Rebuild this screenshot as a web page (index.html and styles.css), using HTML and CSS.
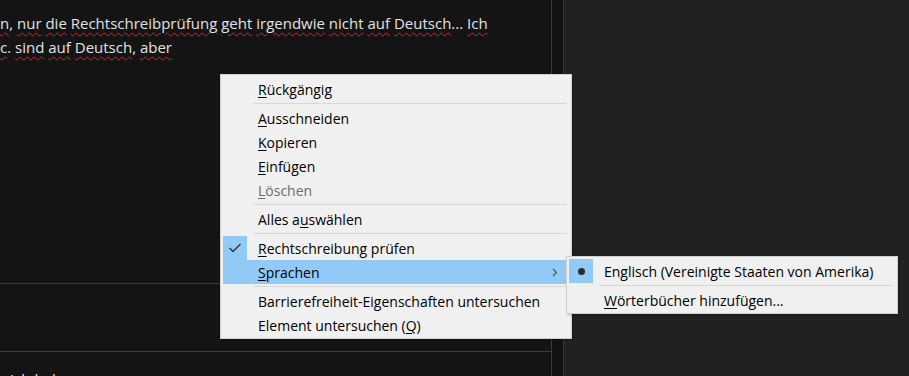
FILE: index.html
```html
<!DOCTYPE html>
<html lang="de">
<head>
    <meta charset="UTF-8">
    <title>Kontextmenü</title>
    <link rel="stylesheet" href="styles.css">
</head>
<body>
    <div class="page">
        <main class="thread">
            <div class="post">
                <p class="post-text">
                    <span class="typo">n</span>, <span class="typo">nur</span> <span class="typo">die</span> <span class="typo">Rechtschreibprüfung</span> <span class="typo">geht</span> <span class="typo">irgendwie</span> <span class="typo">nicht</span> <span class="typo">auf</span> <span class="typo">Deutsch</span>... <span class="typo">Ich</span><br>
                    <span class="typo">c</span>. <span class="typo">sind</span> <span class="typo">auf</span> <span class="typo">Deutsch</span>, <span class="typo">aber</span>
                </p>
            </div>
            <div class="post-footer"></div>
            <p class="reply-text">Ich habe</p>
        </main>
        <div class="gutter"></div>
        <aside class="sidebar"></aside>
    </div>

    <!-- Kontextmenü -->
    <div class="context-menu main-menu">
        <div class="menu-item"><span class="icon-col"></span><span><u>R</u>ückgängig</span></div>
        <div class="menu-sep"></div>
        <div class="menu-item"><span class="icon-col"></span><span><u>A</u>usschneiden</span></div>
        <div class="menu-item"><span class="icon-col"></span><span><u>K</u>opieren</span></div>
        <div class="menu-item"><span class="icon-col"></span><span><u>E</u>infügen</span></div>
        <div class="menu-item disabled"><span class="icon-col"></span><span><u>L</u>öschen</span></div>
        <div class="menu-sep"></div>
        <div class="menu-item"><span class="icon-col"></span><span>Alles a<u>u</u>swählen</span></div>
        <div class="menu-sep"></div>
        <div class="menu-item">
            <span class="icon-col checked">
                <svg width="14" height="10" viewBox="0 0 14 10"><polyline points="1.5,5 5,8.5 12.5,1" fill="none" stroke="#333" stroke-width="1.4"/></svg>
            </span>
            <span><u>R</u>echtschreibung prüfen</span>
        </div>
        <div class="menu-item active">
            <span class="icon-col"></span><span><u>S</u>prachen</span>
            <svg class="arrow" width="6" height="9" viewBox="0 0 6 9"><polyline points="1,1 4.5,4.5 1,8" fill="none" stroke="#555" stroke-width="1.1"/></svg>
        </div>
        <div class="menu-sep"></div>
        <div class="menu-item"><span class="icon-col"></span><span>Barrierefreiheit-Eigenschaften untersuchen</span></div>
        <div class="menu-item"><span class="icon-col"></span><span>Element untersuchen (<u>Q</u>)</span></div>
    </div>

    <div class="context-menu sub-menu">
        <div class="menu-item">
            <span class="icon-col checked"><span class="radio-dot"></span></span>
            <span>Englisch (Vereinigte Staaten von Amerika)</span>
        </div>
        <div class="menu-sep"></div>
        <div class="menu-item"><span class="icon-col"></span><span><u>W</u>örterbücher hinzufügen...</span></div>
    </div>
</body>
</html>
```

FILE: styles.css
```css
* {
    margin: 0;
    padding: 0;
    box-sizing: border-box;
}

body {
    width: 909px;
    height: 376px;
    overflow: hidden;
    background: #121212;
    font-family: 'Open Sans', 'Noto Sans', sans-serif;
    position: relative;
}

.page {
    display: flex;
    height: 376px;
}

/* linke Spalte mit dem Beitrag */
.thread {
    width: 552px;
    border-right: 1px solid #3a3a3a;
    background: #141414;
    display: flex;
    flex-direction: column;
    overflow: hidden;
}

.post {
    height: 284px;
    flex-shrink: 0;
    border-bottom: 1px solid #3a3a3a;
    padding-top: 11px;
}

.post-text {
    color: #e2e2e2;
    font-size: 15px;
    line-height: 24px;
    white-space: nowrap;
}

.typo {
    text-decoration: underline wavy #e0202a;
    text-decoration-thickness: 1px;
    text-underline-offset: 3px;
}

.post-footer {
    height: 68px;
    flex-shrink: 0;
    border-bottom: 1px solid #3a3a3a;
}

.reply-text {
    flex-shrink: 0;
    color: #e2e2e2;
    font-size: 15px;
    line-height: 24px;
    padding: 15px 0 0 10px;
}

.gutter {
    width: 12px;
    background: #121212;
    border-right: 1px solid #363636;
}

.sidebar {
    flex: 1;
    background: #212121;
}

/* Kontextmenü */
.context-menu {
    position: absolute;
    background: #f0f0f0;
    border: 1px solid #cfcfcf;
    padding: 2px 4px 1px 2px;
    font-family: 'Open Sans', 'Noto Sans', sans-serif;
    font-size: 14px;
    color: #000;
    box-shadow: 1px 1px 2px rgba(0, 0, 0, 0.2);
}

.main-menu {
    left: 220px;
    top: 74px;
    width: 352px;
}

.sub-menu {
    left: 566px;
    top: 256px;
    width: 332px;
}

.menu-item {
    display: flex;
    align-items: center;
    height: 24px;
    white-space: nowrap;
    position: relative;
}

.menu-item u {
    text-underline-offset: 2px;
}

.icon-col {
    width: 24px;
    height: 24px;
    margin-right: 11px;
    display: flex;
    align-items: center;
    justify-content: center;
}

.icon-col.checked {
    background: #91c9f7;
}

.radio-dot {
    width: 7px;
    height: 7px;
    border-radius: 50%;
    background: #2b2b2b;
}

.menu-item.active {
    background: #91c9f7;
}

.menu-item.disabled {
    color: #6d6d6d;
}

.arrow {
    position: absolute;
    right: 9px;
    top: 8px;
}

.menu-sep {
    height: 1px;
    background: #d7d7d7;
    margin: 2px 0 2px 30px;
}
```
